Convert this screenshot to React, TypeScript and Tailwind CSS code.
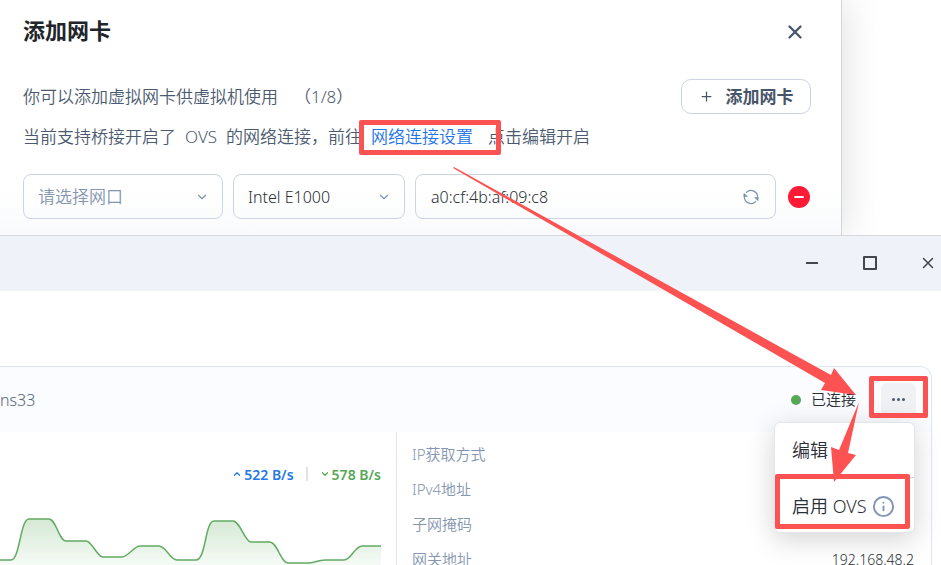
import React, { useState } from 'react'
import { ChevronDown, ChevronUp, Info, Minus, Plus, X } from 'lucide-react'

const details = [
  { label: 'IP获取方式', value: '' },
  { label: 'IPv4地址', value: '' },
  { label: '子网掩码', value: '' },
  { label: '网关地址', value: '192.168.48.2' },
]

const trafficLine =
  'M0 67 H11 C20 67 20 26 29 26 H49 C56 26 59 48 66 48 H86 C92 48 97 64 103 64 H122 C128 64 134 53 140 53 H159 C166 53 170 67 177 67 H196 C206 67 205 28 214 28 H233 C240 28 245 49 251 49 H270 C277 49 281 70 288 70 H309 C316 70 317 67 325 67 H344 C351 67 355 53 362 53 H381'

function RefreshIcon() {
  return (
    <svg className="size-4" viewBox="0 0 16 16" fill="none" stroke="currentColor" strokeWidth="1.2" strokeLinecap="round">
      <path d="M3.4 3.4 A6.6 6.6 0 0 1 14.6 8.6" />
      <path d="M12.6 12.6 A6.6 6.6 0 0 1 1.4 7.4" />
      <path d="M12.4 8.8 L15 8.8 L14.8 11 Z" fill="currentColor" />
      <path d="M3.6 7.2 L1 7.2 L1.2 5 Z" fill="currentColor" />
    </svg>
  )
}

function AddNetworkCard() {
  const [mac, setMac] = useState('a0:cf:4b:af:09:c8')

  return (
    <section className="relative mr-[99px] h-[235px] border-r border-gray-300 bg-linear-to-b from-white from-80% to-gray-50 pt-4 pr-[30px] pl-[23px] shadow-[0_0_40px_rgba(0,0,0,0.14)]">
      <div className="flex h-8 items-center justify-between">
        <h1 className="pb-1 text-[22px] leading-7 font-bold text-[#212529]">添加网卡</h1>
        <button type="button" aria-label="关闭" className="text-[#475569]">
          <X size={22} strokeWidth={2.5} className="mr-[5px]" />
        </button>
      </div>

      <div className="mt-[31px] flex h-[35px] items-center justify-between">
        <p className="flex gap-4 text-[17px] text-[#4b5a70]">
          <span>你可以添加虚拟网卡供虚拟机使用</span>
          <span>（1/8）</span>
        </p>
        <button type="button" className="flex h-[35px] w-[130px] items-center justify-center gap-3 rounded-[10px] border border-[#cbd5e1] text-[17px] font-bold text-[#475569]">
          <Plus size={15} strokeWidth={2} />
          添加网卡
        </button>
      </div>

      <p className="mt-[9px] flex h-7 items-center gap-[9px] text-[17px] whitespace-nowrap text-[#4b5a70]">
        <span>当前支持桥接开启了</span>
        <span>OVS</span>
        <span>的网络连接，前往</span>
        <a href="#network" className="mr-[6px] text-[#1f74e8]">网络连接设置</a>
        <span>点击编辑开启</span>
      </p>

      <div className="mt-[23px] flex items-center gap-[10px]">
        <div className="relative h-[45px] w-[200px]">
          <select aria-label="网口" className="size-full appearance-none rounded-lg border border-[#cbd5e1] pl-[14px] text-[17px] text-[#8496b0]">
            <option>请选择网口</option>
          </select>
          <ChevronDown size={14} className="pointer-events-none absolute top-4 right-[14px] text-[#8095b0]" />
        </div>
        <div className="relative h-[45px] w-[172px]">
          <select aria-label="网卡类型" className="size-full appearance-none rounded-lg border border-[#cbd5e1] pl-[14px] text-[16px] text-[#2b2f36]">
            <option>Intel E1000</option>
          </select>
          <ChevronDown size={14} className="pointer-events-none absolute top-4 right-[14px] text-[#8095b0]" />
        </div>
        <div className="flex h-[45px] min-w-0 grow items-center rounded-lg border border-[#cbd5e1] px-[15px]">
          <input aria-label="MAC 地址" value={mac} onChange={(e) => setMac(e.target.value)} className="min-w-0 grow text-[16px] text-[#2b2f36] outline-none" />
          <button type="button" aria-label="刷新" className="pr-px text-[#7f93ad]">
            <RefreshIcon />
          </button>
        </div>
        <button type="button" aria-label="删除" className="mr-px ml-[2px] flex size-[22px] items-center justify-center rounded-full bg-[#ff1b35] text-white">
          <Minus size={16} strokeWidth={3} strokeLinecap="butt" />
        </button>
      </div>
    </section>
  )
}

function TitleBar() {
  return (
    <div className="flex h-14 items-center justify-end gap-10 border-t border-[#d5d8dc] bg-[#eff3f9] pr-1 pb-px text-[#43474c]">
      <button type="button" aria-label="最小化" className="flex size-[18px] items-center justify-center">
        <i className="h-[2px] w-3 bg-current" />
      </button>
      <button type="button" aria-label="最大化" className="flex size-[18px] items-center justify-center">
        <i className="size-[14px] rounded-[1px] border-2 border-current" />
      </button>
      <button type="button" aria-label="关闭窗口" className="flex size-[18px] items-center justify-center">
        <X size={18} strokeWidth={2} />
      </button>
    </div>
  )
}

function ConnectionMenu() {
  return (
    <div className="absolute top-[55px] right-[16px] w-[141px] rounded-md border border-[#e2e6ea] bg-white text-[18px] text-[#2b2f36] shadow-[0_6px_28px_rgba(0,0,0,0.18)]">
      <button type="button" className="flex h-[55px] w-full items-center border-b border-[#cbd5e1] pl-[17px]">编辑</button>
      <button type="button" className="flex h-[54px] w-full items-center gap-[5px] pt-[3px] pl-[17px]">
        启用 OVS
        <Info size={23} strokeWidth={2} className="text-[#8095b5]" />
      </button>
    </div>
  )
}

function NetworkPanel() {
  return (
    <section className="relative mt-[75px] mr-[9px] h-[260px] rounded-tr-xl border-t border-r border-[#dfe6ef] bg-white text-[15px]">
      <header className="flex h-[65px] items-center rounded-tr-xl bg-[#fafcff]">
        <h2 className="text-[16px] font-[350] text-[#566377]">ns33</h2>
        <span className="mr-[25px] ml-auto flex items-center gap-[10px] text-[#2b2f36]">
          <i className="size-[10px] rounded-full bg-[#57a757]" />
          已连接
        </span>
        <button type="button" aria-label="更多" className="mr-[15px] flex h-[34px] w-[35px] items-center justify-center gap-[2px] rounded-md bg-[#f0f1f5]">
          <i className="size-[3px] rounded-full bg-[#475569]" />
          <i className="size-[3px] rounded-full bg-[#475569]" />
          <i className="size-[3px] rounded-full bg-[#475569]" />
        </button>
      </header>

      <div className="flex h-[194px]">
        <div className="w-[397px] border-r border-[#dfe6ef] pt-[31px]">
          <div className="flex h-[22px] items-center justify-end pr-[15px] text-[14px] font-semibold">
            <span className="flex items-center gap-[2px] text-[#2478e5]"><ChevronUp size={10} strokeWidth={3} />522 B/s</span>
            <span className="mx-3 h-[14px] w-[2px] bg-[#dfe2e6]" />
            <span className="flex items-center gap-[2px] text-[#57a757]"><ChevronDown size={10} strokeWidth={3} />578 B/s</span>
          </div>
          <svg className="mt-2" width="381" height="90" viewBox="0 0 381 90" fill="none">
            <defs>
              <linearGradient id="traffic" x1="0" y1="26" x2="0" y2="85" gradientUnits="userSpaceOnUse">
                <stop stopColor="#57a757" stopOpacity="0.25" />
                <stop offset="1" stopColor="#57a757" stopOpacity="0" />
              </linearGradient>
            </defs>
            <path d={trafficLine + ' V90 H0 Z'} fill="url(#traffic)" />
            <path d={trafficLine} stroke="#62ab62" strokeWidth="1.5" />
          </svg>
        </div>
        <dl className="grow pt-[5px] pr-[17px] pl-[15px]">
          {details.map((item) => (
            <div key={item.label} className="flex h-[35px] items-center justify-between">
              <dt className="text-[#8496b0]">{item.label}</dt>
              <dd className="text-[14px] text-[#2b2f36]">{item.value}</dd>
            </div>
          ))}
        </dl>
      </div>
      <ConnectionMenu />
    </section>
  )
}

function Guides() {
  return (
    <div className="pointer-events-none absolute inset-0">
      <div className="absolute top-[120px] left-[359px] h-[35px] w-[142px] rounded-xs border-[5px] border-[#fc5252]" />
      <div className="absolute top-[376px] right-[13px] h-[42px] w-[59px] rounded-xs border-[5px] border-[#fc5252]" />
      <div className="absolute top-[474px] right-[31px] h-[55px] w-[135px] rounded-xs border-[5px] border-[#fc5252]" />
      <svg className="absolute top-0 left-0" width="941" height="565" viewBox="0 0 941 565" fill="#fc5252">
        <path d="M454 167 L831 375 L834 368 L856 395 L821 390 L825 383 L453 168 Z" />
        <path d="M859 402 L848 453 L856 455 L834 482 L831 447 L839 450 Z" />
      </svg>
    </div>
  )
}

export default function App() {
  return (
    <main className="relative h-screen overflow-hidden bg-white font-[350] font-['Noto_Sans','Noto_Sans_CJK_SC',sans-serif]">
      <AddNetworkCard />
      <div className="relative bg-white">
        <TitleBar />
        <NetworkPanel />
      </div>
      <Guides />
    </main>
  )
}
